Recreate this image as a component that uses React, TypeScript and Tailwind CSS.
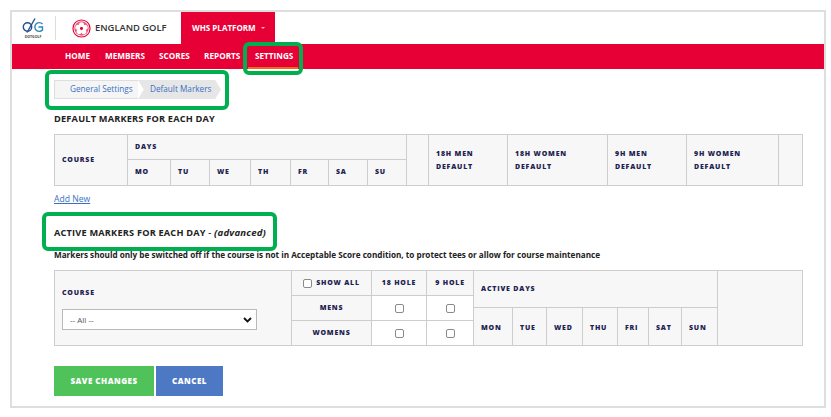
const font = { fontFamily: '"Open Sans", sans-serif' };

const th =
  "border border-[#cdcdcd] bg-[#f7f7f7] align-middle text-[7px] font-extrabold uppercase tracking-[0.8px] text-[#1d2350] px-[7px] whitespace-nowrap";

function Check() {
  return <span className="mx-auto block h-[9px] w-[9px] rounded-[2px] border border-[#8a8a8a] bg-white" />;
}

function Logo() {
  return (
    <div className="flex h-[24px] w-[34px] flex-col items-start border-r border-[#dcdcdc]">
      <svg width="22" height="17" viewBox="0 0 22 16" fill="none" className="mt-[1px]">
        <circle cx="5.5" cy="9.5" r="4.2" stroke="#24508f" strokeWidth="1.4" />
        <path d="M5 15 L13 1" stroke="#24508f" strokeWidth="1.4" />
        <path d="M20.5 6.5 A4.4 4.4 0 1 0 20.5 12.5 V9.5 H16.5" stroke="#2f86b8" strokeWidth="1.4" />
      </svg>
      <span className="w-[22px] text-center text-[3.5px] font-bold leading-[5px] text-[#444]">DOTGOLF</span>
    </div>
  );
}

function Rose() {
  const petals = [0, 72, 144, 216, 288];
  return (
    <svg width="19" height="19" viewBox="0 0 20 20" fill="none">
      <circle cx="10" cy="10" r="9" stroke="#e4003a" strokeWidth="1.2" />
      <circle cx="10" cy="10" r="7.6" fill="#ef5a78" />
      {petals.map((a) => (
        <circle key={a} cx="10" cy="6" r="2.7" fill="#fff" transform={`rotate(${a} 10 10)`} />
      ))}
      <circle cx="10" cy="10" r="1.5" fill="#e4003a" />
    </svg>
  );
}

function Highlight({ className }: { className: string }) {
  return (
    <div className={`pointer-events-none absolute rounded-[6px] border-[4px] border-[#00b050] ${className}`} />
  );
}

export default function App() {
  const nav = [
    ["HOME", "w-[40px]"],
    ["MEMBERS", "w-[54px]"],
    ["SCORES", "w-[45px]"],
    ["REPORTS", "w-[51px]"],
    ["SETTINGS", "w-[40px]"],
  ];
  return (
    <div className="relative h-[417px] w-[831px] overflow-hidden bg-white" style={font}>
      <div className="absolute left-[10px] top-[10px] h-[398px] w-[816px] border-2 border-[#dedede] bg-white">
        <div className="flex h-[32px] items-stretch">
          <div className="flex w-[169px] items-center pl-[10px]">
            <Logo />
            <div className="ml-[16px] flex items-center gap-[4px]">
              <Rose />
              <span className="text-[9.4px] font-semibold text-[#333] whitespace-nowrap">ENGLAND GOLF</span>
            </div>
          </div>
          <div className="flex w-[94px] items-center bg-[#e60036] pl-[11px] text-[8px] font-bold text-white">
            WHS PLATFORM
            <span className="ml-[5px] mb-[1px] h-0 w-0 border-x-[2px] border-t-[2px] border-x-transparent border-t-[#f7b5c5]" />
          </div>
        </div>
        <div className="flex h-[25px] items-center bg-[#e60036] pl-[53px] text-[8.2px] font-bold text-white">
          {nav.map(([label, w]) => (
            <span key={label} className={`${w} whitespace-nowrap`}>
              {label}
            </span>
          ))}
        </div>

        <div className="pl-[42px] pr-[22px]">
          <div className="mt-[11px] flex h-[19px] w-[167px] text-[8.2px] text-[#3a71c4]">
            <div className="flex w-[84px] items-center border-y border-l border-[#dedede] bg-[#f5f5f5] pl-[15px] whitespace-nowrap">
              General Settings
            </div>
            <div className="flex w-[83px] items-center bg-[#e6e6e6] pl-[12px] whitespace-nowrap [clip-path:polygon(0_0,93%_0,100%_50%,93%_100%,0_100%,7%_50%)]">
              Default Markers
            </div>
          </div>

          <h2 className="mt-[13px] text-[9.2px] font-bold leading-[14px] tracking-[0.2px] text-[#222]">
            DEFAULT MARKERS FOR EACH DAY
          </h2>

          <table className="mt-[8px] w-[748px] table-fixed border-collapse">
            <colgroup>
              <col className="w-[73px]" />
              <col className="w-[43px]" />
              <col className="w-[39px]" />
              <col className="w-[41px]" />
              <col className="w-[40px]" />
              <col className="w-[38px]" />
              <col className="w-[39px]" />
              <col className="w-[39px]" />
              <col className="w-[22px]" />
              <col className="w-[79px]" />
              <col className="w-[100px]" />
              <col className="w-[79px]" />
              <col className="w-[92px]" />
              <col className="w-[24px]" />
            </colgroup>
            <tbody>
              <tr className="h-[25px]">
                <th rowSpan={2} className={`${th} text-left`}>Course</th>
                <th colSpan={7} className={`${th} text-left`}>Days</th>
                <th rowSpan={2} className={th} />
                {["18H Men", "18H Women", "9H Men", "9H Women"].map((h) => (
                  <th key={h} rowSpan={2} className={`${th} text-left`}>
                    <div className="leading-[13.5px]">{h}</div>
                    <div className="leading-[13.5px]">Default</div>
                  </th>
                ))}
                <th rowSpan={2} className={th} />
              </tr>
              <tr className="h-[26px]">
                {["Mo", "Tu", "We", "Th", "Fr", "Sa", "Su"].map((d) => (
                  <th key={d} className={`${th} text-left`}>{d}</th>
                ))}
              </tr>
            </tbody>
          </table>

          <a className="mt-[7px] block text-[8.6px] leading-[12px] text-[#3a71c4] underline">Add New</a>

          <h2 className="mt-[21px] text-[9.2px] font-bold leading-[14px] tracking-[0.2px] text-[#222]">
            ACTIVE MARKERS FOR EACH DAY <span className="font-semibold">-</span>{" "}
            <span className="text-[9.6px] italic">(advanced)</span>
          </h2>
          <p className="mt-[9px] text-[8.16px] font-bold leading-[12px] text-[#222] whitespace-nowrap">
            Markers should only be switched off if the course is not in Acceptable Score condition, to protect tees or allow for course maintenance
          </p>

          <table className="mt-[9px] w-[748px] table-fixed border-collapse">
            <colgroup>
              <col className="w-[237px]" />
              <col className="w-[80px]" />
              <col className="w-[55px]" />
              <col className="w-[47px]" />
              <col className="w-[39px]" />
              <col className="w-[34px]" />
              <col className="w-[36px]" />
              <col className="w-[35px]" />
              <col className="w-[31px]" />
              <col className="w-[33px]" />
              <col className="w-[36px]" />
              <col className="w-[85px]" />
            </colgroup>
            <tbody>
              <tr className="h-[25px]">
                <th rowSpan={4} className={`${th} pt-[2px] text-left`}>
                  <div className="mb-[11px] leading-[10px]">Course</div>
                  <div className="flex h-[21px] w-[195px] items-center justify-between border border-[#b9b9b9] bg-white pl-[7px] pr-[4px] text-[8px] font-normal normal-case tracking-normal text-[#555]">
                    -- All --
                    <svg width="9" height="6" viewBox="0 0 9 6" fill="none">
                      <path d="M1 1 L4.5 4.5 L8 1" stroke="#111" strokeWidth="1.8" />
                    </svg>
                  </div>
                </th>
                <th className={`${th} text-center`}>
                  <span className="flex items-center justify-center gap-[4px]">
                    <span className="block"><Check /></span> Show All
                  </span>
                </th>
                <th className={`${th} text-center`}>18 Hole</th>
                <th className={`${th} text-center`}>9 Hole</th>
                <th colSpan={7} rowSpan={2} className={`${th} text-left`}>Active Days</th>
                <th rowSpan={4} className={th} />
              </tr>
              <tr className="h-[12px]">
                <th rowSpan={2} className={`${th} text-center`}>Mens</th>
                <td rowSpan={2} className="border border-[#cdcdcd] align-middle"><Check /></td>
                <td rowSpan={2} className="border border-[#cdcdcd] align-middle"><Check /></td>
              </tr>
              <tr className="h-[13px]">
                {["Mon", "Tue", "Wed", "Thu", "Fri", "Sat", "Sun"].map((d) => (
                  <th key={d} rowSpan={2} className={`${th} pt-[4px] text-left`}>{d}</th>
                ))}
              </tr>
              <tr className="h-[25px]">
                <th className={`${th} text-center`}>Womens</th>
                <td className="border border-[#cdcdcd] align-middle"><Check /></td>
                <td className="border border-[#cdcdcd] align-middle"><Check /></td>
              </tr>
            </tbody>
          </table>

          <div className="mt-[20px] flex gap-[2px]">
            <button className="h-[30px] w-[100px] bg-[#4fc35a] text-[8px] font-extrabold tracking-[0.5px] text-white">
              SAVE CHANGES
            </button>
            <button className="h-[30px] w-[67px] bg-[#4d78c4] text-[8px] font-extrabold tracking-[0.5px] text-white">
              CANCEL
            </button>
          </div>
        </div>
      </div>

      <div className="absolute left-[248px] top-[67px] h-[2px] w-[50px] bg-[#ee6a1f]" />
      <Highlight className="left-[243px] top-[42px] h-[33px] w-[60px]" />
      <Highlight className="left-[45px] top-[70px] h-[40px] w-[184px]" />
      <Highlight className="left-[42px] top-[212px] h-[39px] w-[235px]" />
    </div>
  );
}
